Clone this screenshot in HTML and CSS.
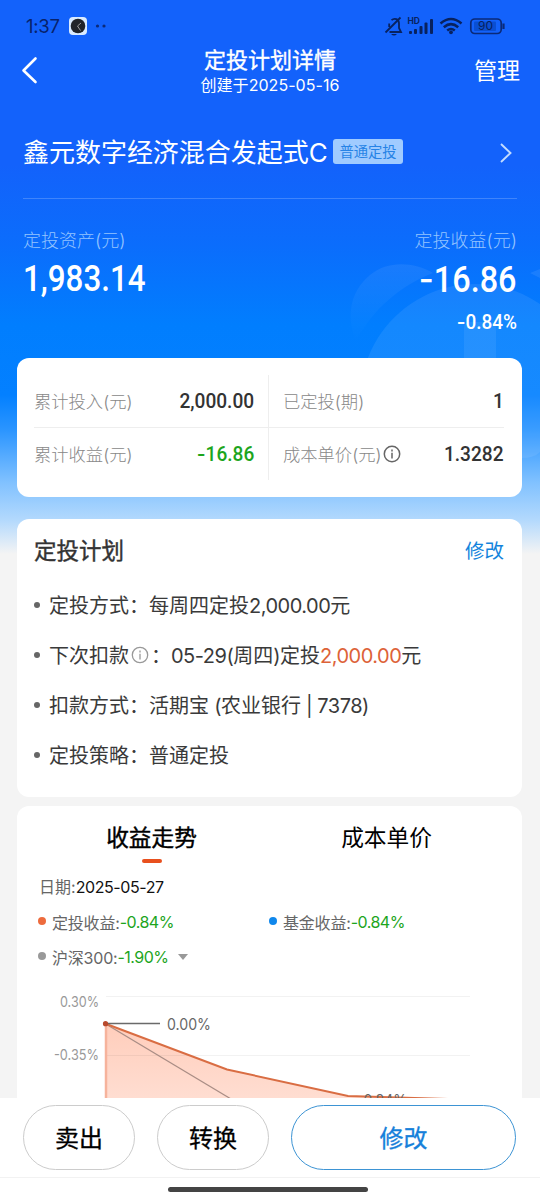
FILE: index.html
```html
<!DOCTYPE html>
<html lang="zh-CN">
<head>
<meta charset="utf-8">
<title>定投计划详情</title>
<link rel="stylesheet" href="styles.css">
</head>
<body>
<div class="screen">
  <svg class="backdrop" width="540" height="560" viewBox="0 0 540 560" aria-hidden="true">
    <defs>
      <linearGradient id="bell" x1="0" y1="0" x2="0" y2="1"><stop offset="0" stop-color="#fff" stop-opacity=".07"/><stop offset="1" stop-color="#fff" stop-opacity="0"/></linearGradient>
    </defs>
    <path d="M433 273C414 262 388 260 370 275C348 293 347 320 356 341C373 309 400 286 433 273Z" fill="url(#bell)"/>
    <path d="M530 273L540 269V278Z" fill="#fff" fill-opacity=".08"/>
    <path d="M364 370A115 115 0 0 1 540 304V452Q534 458 522 458V370Z" fill="#fff" fill-opacity=".08"/>
    <path d="M464 370V328Q464 322 470 322H490Q496 322 496 328V370Z" fill="#fff" fill-opacity=".07"/>
  </svg>

  <div class="status">
    <span class="clock">1:37</span>
    <svg class="status-app" width="38" height="18" viewBox="0 0 38 18">
      <rect width="18" height="18" rx="4" fill="#d9ebff"/><circle cx="9" cy="9" r="7.3" fill="#20242a"/>
      <path d="M12 6L8.500 9L11.500 13.500" fill="none" stroke="#bbb" stroke-width=".8"/>
      <circle cx="28.500" cy="9" r="1.600" fill="#0b2a78"/><circle cx="35" cy="9" r="1.600" fill="#0b2a78"/>
    </svg>
    <svg class="status-icons" width="122" height="20" viewBox="384 16 122 20">
      <g fill="none" stroke="#08225f" stroke-width="1.8">
        <path d="M391.500 20.200C394.500 17.500 399 19 399 23.500V28L401 32H389.500"/>
        <path d="M385.500 32.500L400.500 17.500"/>
        <path d="M389.200 27V23.500"/>
      </g>
      <path d="M391 34H397Q394 37 391 34Z" fill="#08225f"/>
      <text x="407.500" y="24" class="hd">HD</text>
      <g fill="#08225f"><rect x="409" y="31" width="3" height="3" rx="1"/><rect x="414" y="29" width="3" height="5" rx="1"/><rect x="419.500" y="26" width="3" height="8" rx="1"/><rect x="424.500" y="22.500" width="3" height="11.500" rx="1"/><rect x="430" y="19" width="3" height="15" rx="1"/></g>
      <g fill="none" stroke="#08225f" stroke-width="2.500"><path d="M440.500 23.500Q451 14.500 461.500 23.500"/><path d="M443.800 27.200Q451 21 458.200 27.200"/><path d="M447.200 30.500Q451 27.500 454.800 30.500"/></g>
      <circle cx="451" cy="32.300" r="1.900" fill="#08225f"/>
      <rect x="470.800" y="19" width="30.400" height="14.500" rx="4" fill="none" stroke="#0b2a78" stroke-width="1.700"/>
      <rect x="474" y="21.500" width="22" height="9.500" rx="1" fill="#0a4fd2"/>
      <path d="M503.500 23.500V29" stroke="#0b2a78" stroke-width="2.200"/>
      <text x="485.500" y="30.300" class="battery">90</text>
    </svg>
  </div>

  <header class="nav">
    <svg class="back" width="18" height="28" viewBox="0 0 18 28"><path d="M15.500 2.500L3.500 14.500L15.500 26" fill="none" stroke="#fff" stroke-width="2.600" stroke-linecap="round" stroke-linejoin="round"/></svg>
    <div class="heading"><h1>定投计划详情</h1><p>创建于2025-05-16</p></div>
    <a class="manage">管理</a>
  </header>

  <section class="fund">
    <h2>鑫元数字经济混合发起式C</h2>
    <span class="tag">普通定投</span>
    <svg class="go" width="14" height="22" viewBox="0 0 14 22"><path d="M2 2L11.500 11L2 20" fill="none" stroke="#c3dcff" stroke-width="1.900"/></svg>
  </section>

  <section class="assets">
    <div class="asset"><p class="cap">定投资产(元)</p><p class="big total"><span>1,983.14</span></p></div>
    <div class="asset right"><p class="cap">定投收益(元)</p><p class="big"><span><i>-</i>16.86</span></p><p class="rate"><span><i>-</i>0.84%</span></p></div>
  </section>

  <section class="card totals">
    <div class="cell"><span>累计投入(元)</span><b>2,000.00</b></div>
    <div class="cell"><span>已定投(期)</span><b>1</b></div>
    <div class="cell"><span>累计收益(元)</span><b class="green"><i>-</i>16.86</b></div>
    <div class="cell"><span>成本单价(元)</span><svg class="info dark" width="18" height="18" viewBox="0 0 18 18"><circle cx="9" cy="9" r="7.700"/><path d="M9 7.800V13.500M9 4.500V6.500"/></svg><b>1.3282</b></div>
  </section>

  <section class="card plan">
    <div class="plan-head"><h3>定投计划</h3><a>修改</a></div>
    <ul>
      <li><span>定投方式：</span><span class="val">每周四定投<s>2,000.00</s>元</span></li>
      <li><span>下次扣款</span><svg class="info" width="18" height="18" viewBox="0 0 18 18"><circle cx="9" cy="9" r="7.700"/><path d="M9 7.800V13.500M9 4.500V6.500"/></svg><span class="colon">：</span><span class="val"><s>05-29(</s>周四<s>)</s>定投<em>2,000.00</em>元</span></li>
      <li><span>扣款方式：</span><span class="val">活期宝<s> (</s>农业银行<s> | 7378)</s></span></li>
      <li><span>定投策略：</span><span class="val">普通定投</span></li>
    </ul>
  </section>

  <section class="card trend">
    <div class="tabs"><div class="tab active">收益走势</div><div class="tab">成本单价</div></div>
    <p class="date">日期:<span>2025-05-27</span></p>
    <div class="legend">
      <div class="key"><u class="dot orange"></u>定投收益:<span class="green">-0.84%</span></div>
      <div class="key"><u class="dot blue"></u>基金收益:<span class="green">-0.84%</span></div>
      <div class="key"><u class="dot grey"></u>沪深300:<span class="green">-1.90%</span><svg class="caret" width="10" height="6" viewBox="0 0 10 6"><path d="M0 0H10L5 6Z" fill="#999"/></svg></div>
    </div>
    <svg class="chart" width="505" height="120" viewBox="17 988 505 120">
      <defs><linearGradient id="area" x1="0" y1="0" x2="0" y2="1"><stop offset="0" stop-color="#ffcdbb"/><stop offset="1" stop-color="#ffe0d5"/></linearGradient></defs>
      <path d="M105 1023.500L227 1069.500L348 1096L448 1099V1110H105Z" fill="url(#area)"/>
      <path d="M106 996.500H470M106 1055.500H470" stroke="#000" stroke-opacity=".05"/>
      <path d="M106 1024V1110" stroke="#f6b39c" stroke-width="2.500"/>
      <path d="M105 1023.500L231 1099" stroke="#a98d85" stroke-width="1.300"/>
      <path d="M105 1023.500L227 1069.500L348 1096L448 1099" fill="none" stroke="#d96d43" stroke-width="2"/>
      <path d="M105 1023.500H160" stroke="#6a6a6a" stroke-width="1.400"/>
      <circle cx="105.500" cy="1023.700" r="2.600" fill="#b8492c"/>
      <text x="99" y="1007" text-anchor="end" textLength="39" lengthAdjust="spacingAndGlyphs" class="tick">0.30%</text>
      <text x="99" y="1059.500" text-anchor="end" textLength="45" lengthAdjust="spacingAndGlyphs" class="tick">-0.35%</text>
      <text x="167" y="1029.500" textLength="44" lengthAdjust="spacingAndGlyphs" class="point">0.00%</text>
      <text x="357" y="1106" textLength="50" lengthAdjust="spacingAndGlyphs" class="point">-0.84%</text>
    </svg>
  </section>

  <footer class="actions">
    <div class="buttons"><button>卖出</button><button>转换</button><button class="primary">修改</button></div>
    <div class="home"></div>
  </footer>
</div>
</body>
</html>
```
FILE: styles.css
```css
* { box-sizing: border-box; margin: 0; padding: 0; }
body { width: 540px; height: 1200px; overflow: hidden; font-family: Inter, "Noto Sans CJK SC", sans-serif; font-weight: 400; }
i, em { font-style: normal; }
s, u { text-decoration: none; }
svg { display: block; flex: none; }
.screen {
  position: relative; width: 540px; height: 1200px; overflow: hidden; display: flex; flex-direction: column;
  background: linear-gradient(to bottom, #1362fb 0, #1362fb 165px, #0b6dfc 245px, #017efe 325px, #0380ff 395px, #2b95ff 430px, #80c1ff 482px, #b3d9fd 520px, #f4f4f4 554px);
}
.backdrop { position: absolute; left: 0; top: 0; }
.screen > *:not(.backdrop) { position: relative; flex: none; white-space: nowrap; }

.status { height: 40px; padding: 16px 34px 0 26px; display: flex; align-items: flex-start; }
.clock { width: 43px; font-size: 18.500px; line-height: 21px; letter-spacing: -.3px; color: #08226b; }
.status-app { margin-top: 1px; }
.status-icons { margin-left: auto; }
.hd { font: 700 8.500px Inter; fill: #08225f; }
.battery { font: 400 12px Inter; fill: #08225f; text-anchor: middle; }

.nav { height: 72px; padding: 0 20px; display: grid; grid-template-columns: 90px 1fr 90px; color: #fff; }
.back { margin-top: 16px; }
.heading { text-align: center; }
.heading h1 { font-size: 22px; line-height: 30px; font-weight: 400; -webkit-text-stroke: .35px currentColor; margin-top: 5px; }
.heading p { font-size: 16px; line-height: 20px; letter-spacing: .05px; }
.manage { font-size: 23px; line-height: 30px; margin-top: 16px; text-align: right; }

.fund { height: 87px; margin: 0 23px; padding-top: 25px; display: flex; align-items: flex-start; border-bottom: 1px solid rgba(255,255,255,.2); color: #fff; }
.fund h2 { width: 310px; font-size: 26px; line-height: 32px; font-weight: 400; letter-spacing: -.03px; }
.tag { width: 70px; height: 25px; margin-top: 2px; border-radius: 3px; background: #a0cbff; color: #2683e6; font-size: 14.300px; line-height: 25px; text-align: center; }
.go { margin: 5px 4px 0 auto; }

.assets { height: 159px; padding: 30px 23px 0 23px; display: flex; justify-content: space-between; color: #fff; }
.cap { font-size: 18px; line-height: 24px; font-weight: 300; color: #94c4ff; }
.big { font: 500 36px/50px Roboto; margin-top: 1px; }
.big span, .rate span { display: inline-block; transform: scaleX(.9); transform-origin: 0 50%; }
.total span { transform: scaleX(.87); }
.right span { transform-origin: 100% 50%; }
.right { text-align: right; }
.big i, .rate i, .cell i { font-family: Inter; }
.rate { font: 500 21px/28px Roboto; margin-top: 3px; }

.card { width: 505px; margin-left: 17px; background: #fff; border-radius: 12px; }
.totals { height: 139px; padding: 17px 18px 17px 17px; display: grid; grid-template-columns: 235px 1fr; grid-template-rows: 53px 52px; }
.cell { display: flex; align-items: center; font-size: 17.300px; font-weight: 300; color: #888; }
.cell > span { position: relative; top: -1px; }
.cell:nth-child(odd) { border-right: 1px solid #eee; padding-right: 14px; }
.cell:nth-child(even) { padding-left: 14px; }
.cell:nth-child(-n+2) { border-bottom: 1px solid #eee; }
.cell b { margin-left: auto; font: 500 21px/30px Roboto; color: #333; transform: scaleX(.91); transform-origin: 100% 50%; }
.green, .cell b.green { color: #1da51d; }
.info { fill: none; stroke: #999; stroke-width: 1.300; }
.info.dark { stroke: #666; margin-left: 2px; stroke-width: 1.500; }

.plan { height: 278px; margin-top: 22px; padding: 16px 18px 0 17px; }
.plan-head { display: flex; justify-content: space-between; line-height: 32px; }
.plan h3 { font-size: 22.500px; font-weight: 400; -webkit-text-stroke: .4px currentColor; color: #333; }
.plan a { color: #1484dc; font-size: 19.500px; }
.plan ul { list-style: none; margin-top: 12px; }
.plan li { display: flex; align-items: center; height: 50px; font-size: 20px; color: #3a3a3a; }
.plan li::before { content: ""; width: 6px; height: 6px; margin: 2px 9px 0 0; border-radius: 50%; background: #666; }
.plan .info { margin: 1px 0 0 2px; }
.plan .colon { width: 22px; padding-left: 2px; }
.plan s, em { letter-spacing: -.5px; }
em { color: #dd6238; }

.trend { height: 320px; margin-top: 9px; }
.tabs { display: grid; grid-template-columns: 235px 235px; padding: 15px 17px 0; height: 68px; }
.tab { font-size: 22.700px; line-height: 33px; text-align: center; color: #000; }
.active { -webkit-text-stroke: .4px currentColor; }
.active::after { content: ""; display: block; width: 20px; height: 4px; margin: 5px auto 0; border-radius: 2px; background: #e8501e; }
.date { padding-left: 22px; font-size: 16px; line-height: 26px; color: #666; }
.date span { color: #111; letter-spacing: -.4px; }
.legend { display: grid; grid-template-columns: 231px 1fr; grid-auto-rows: 35px; padding: 4px 0 1px 21px; font-size: 16px; letter-spacing: -.2px; color: #666; }
.key { display: flex; align-items: center; }
.key .green { letter-spacing: -.5px; }
.dot { width: 8px; height: 8px; margin: 0 6px 1px 0; border-radius: 50%; }
.orange { background: #ed6b3d; } .blue { background: #0f87ec; } .grey { background: #999; }
.caret { margin-left: 9px; }
.chart { margin-top: 13px; }
.tick { font: 400 14.500px Inter; fill: #999; }
.point { font: 400 15.500px Inter; fill: #666; }

.screen > .actions { position: absolute; left: 0; top: 1098px; width: 540px; height: 102px; background: #fff; padding-top: 7px; }
.buttons { height: 73px; padding: 0 23px; display: grid; grid-template-columns: 112px 112px 225px; grid-template-rows: 65px; column-gap: 22px; border-bottom: 1px solid #f2f2f2; }
button { border: 1px solid #ccc; border-radius: 33px; background: #fff; font: 400 24px Inter, "Noto Sans CJK SC", sans-serif; -webkit-text-stroke: .3px currentColor; color: #000; padding-bottom: 2px; }
.primary { border-color: #3d94d4; color: #1680da; }
.home { width: 200px; height: 5px; margin: 9px 0 0 168px; border-radius: 3px; background: #444; }
```
